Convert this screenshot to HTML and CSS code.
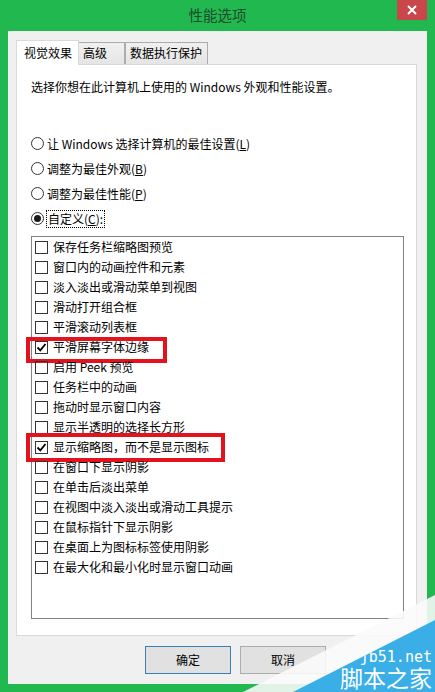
FILE: index.html
```html
<!DOCTYPE html>
<html lang="zh-CN">
<head>
<meta charset="UTF-8">
<title>性能选项</title>
<link rel="stylesheet" href="styles.css">
</head>
<body>

<div class="window">
	<div class="titlebar">
		<span class="title">性能选项</span>
		<span class="close">
			<svg width="10" height="10" viewBox="0 0 10 10"><path d="M1 1L9 9M9 1L1 9" stroke="#fff" stroke-width="2"/></svg>
		</span>
	</div>

	<div class="client">
		<ul class="tabs">
			<li class="tab on">视觉效果</li>
			<li class="tab t2">高级</li>
			<li class="tab t3">数据执行保护</li>
		</ul>

		<div class="panel">
			<p class="desc">选择你想在此计算机上使用的 Windows 外观和性能设置。</p>

			<ul class="radios">
				<li><i class="radio"></i><span>让 Windows 选择计算机的最佳设置(<u>L</u>)</span></li>
				<li><i class="radio"></i><span>调整为最佳外观(<u>B</u>)</span></li>
				<li><i class="radio"></i><span>调整为最佳性能(<u>P</u>)</span></li>
				<li><i class="radio on"></i><span class="focus">自定义(<u>C</u>):</span></li>
			</ul>

			<ul class="listbox">
				<li><i class="box"></i>保存任务栏缩略图预览</li>
				<li><i class="box"></i>窗口内的动画控件和元素</li>
				<li><i class="box"></i>淡入淡出或滑动菜单到视图</li>
				<li><i class="box"></i>滑动打开组合框</li>
				<li><i class="box"></i>平滑滚动列表框</li>
				<li><i class="box on"><svg width="11" height="11" viewBox="0 0 11 11"><path d="M1.5 5.5L4.3 8.3L9.5 2" fill="none" stroke="#000" stroke-width="1.8"/></svg></i>平滑屏幕字体边缘<span class="mark m1"></span></li>
				<li><i class="box"></i>启用 Peek 预览</li>
				<li><i class="box"></i>任务栏中的动画</li>
				<li><i class="box"></i>拖动时显示窗口内容</li>
				<li><i class="box"></i>显示半透明的选择长方形</li>
				<li><i class="box on"><svg width="11" height="11" viewBox="0 0 11 11"><path d="M1.5 5.5L4.3 8.3L9.5 2" fill="none" stroke="#000" stroke-width="1.8"/></svg></i>显示缩略图，而不是显示图标<span class="mark m2"></span></li>
				<li><i class="box"></i>在窗口下显示阴影</li>
				<li><i class="box"></i>在单击后淡出菜单</li>
				<li><i class="box"></i>在视图中淡入淡出或滑动工具提示</li>
				<li><i class="box"></i>在鼠标指针下显示阴影</li>
				<li><i class="box"></i>在桌面上为图标标签使用阴影</li>
				<li><i class="box"></i>在最大化和最小化时显示窗口动画</li>
			</ul>
		</div>

		<div class="buttons">
			<span class="btn default">确定</span>
			<span class="btn">取消</span>
		</div>
	</div>

	<div class="wm-fade"></div>
	<div class="watermark">
		<span class="wm-site">jb51.net</span>
		<span class="wm-name">脚本之家</span>
	</div>
</div>

</body>
</html>
```

FILE: styles.css
```css
* {
	margin: 0;
	padding: 0;
	box-sizing: border-box;
}
li {
	list-style: none;
}
body {
	font: 12px/16px "Noto Sans CJK SC", "Liberation Sans", sans-serif;
	color: #000;
}
.window {
	position: relative;
	width: 435px;
	height: 692px;
	background: #22b850;
	overflow: hidden;
}
.titlebar {
	height: 31px;
	display: grid;
	grid-template-columns: 1fr auto 1fr;
	align-items: start;
}
.title {
	grid-column: 2;
	margin-top: 6px;
	font-size: 14.5px;
	line-height: 18px;
	color: #1d4a2b;
}
.close {
	grid-column: 3;
	justify-self: end;
	width: 30px;
	height: 20px;
	margin-right: 8px;
	background: #c9474b;
	display: flex;
	align-items: center;
	justify-content: center;
}
.client {
	height: 653px;
	margin: 0 8px;
	padding: 9px 10px 0 8px;
	background: #f0f0f0;
}
.tabs {
	display: flex;
	align-items: flex-end;
	height: 24px;
	position: relative;
	z-index: 1;
}
.tab {
	height: 22px;
	border: 1px solid #acacac;
	border-bottom: none;
	background: linear-gradient(#f0f0f0, #e5e5e5);
	padding: 2px 0 0 4px;
}
.tab.on {
	width: 63px;
	height: 25px;
	margin-bottom: -1px;
	padding: 4px 0 0 7px;
	background: #fff;
	border-color: #d9d9d9;
}
.tab.t2 {
	width: 46px;
	border-left: none;
}
.tab.t3 {
	width: 83px;
	border-left: 1px solid #acacac;
}
.panel {
	height: 572px;
	background: #fff;
	border: 1px solid #d9d9d9;
	padding: 14px 0 0 14px;
}
.radios {
	margin-top: 36px;
}
.radios li {
	height: 25px;
	display: flex;
	align-items: center;
}
.radio {
	width: 13px;
	height: 13px;
	border: 1px solid #333;
	border-radius: 50%;
	margin-right: 3px;
	display: flex;
	align-items: center;
	justify-content: center;
}
.radio.on::after {
	content: "";
	width: 7px;
	height: 7px;
	border-radius: 50%;
	background: #1a1a1a;
}
.focus {
	outline: 1px dotted #000;
	padding: 0 1px;
	line-height: 16px;
}
.listbox {
	width: 373px;
	height: 383px;
	margin-top: 5px;
	border: 1px solid #828282;
	padding: 0 0 0 3px;
}
.listbox li {
	position: relative;
	height: 20px;
	display: flex;
	align-items: center;
}
.box {
	width: 13px;
	height: 13px;
	border: 1px solid #333;
	margin-right: 5px;
	display: flex;
	align-items: center;
	justify-content: center;
}
.mark {
	position: absolute;
	border: 4px solid #e3121c;
	left: -9px;
}
.m1 {
	top: 0;
	width: 141px;
	height: 26px;
}
.m2 {
	top: -4px;
	width: 199px;
	height: 29px;
}
.buttons {
	display: flex;
	gap: 9px;
	padding: 10px 0 0 129px;
}
.btn {
	width: 86px;
	height: 28px;
	border: 1px solid #adadad;
	background: #e1e1e1;
	display: flex;
	align-items: center;
	justify-content: center;
}
.btn.default {
	border-color: #3c7fb1;
}
.wm-fade {
	position: absolute;
	right: 0;
	bottom: 0;
	width: 192px;
	height: 97px;
	background: rgba(250, 250, 250, 0.88);
	clip-path: polygon(100% 0, 100% 100%, 0 100%);
}
.watermark {
	position: absolute;
	right: 0;
	bottom: 0;
	width: 142px;
	height: 72px;
	background: #3aaee6;
	clip-path: polygon(100% 0, 100% 100%, 0 100%);
	color: #fff;
	display: flex;
	flex-direction: column;
	align-items: flex-end;
	padding: 30px 3px 0 0;
}
.wm-site {
	font: 15px/15px "DejaVu Sans Mono", monospace;
}
.wm-name {
	margin-top: 1px;
	font: 23px/23px "Noto Sans CJK SC", sans-serif;
}
```
